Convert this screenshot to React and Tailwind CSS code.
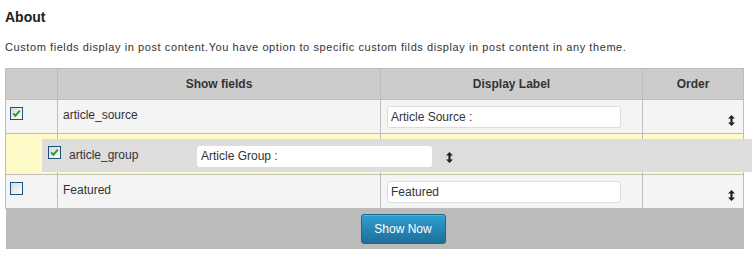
import React from "react";

function Check({ checked }) {
  return (
    <span className="relative inline-block w-[13px] h-[13px] border border-[#1c5180] bg-linear-to-br from-[#d8d8d8] to-white align-top">
      {checked && (
        <svg viewBox="0 0 11 11" className="absolute left-0 top-0 w-[11px] h-[11px]">
          <path d="M2.2 5.4 L4.4 7.8 L8.8 2.6" fill="none" stroke="#25a025" strokeWidth="2" />
        </svg>
      )}
    </span>
  );
}

function SortArrow() {
  return (
    <svg viewBox="0 0 7 11" className="inline-block w-[7px] h-[11px]">
      <path d="M3.5 0 L7 3.6 H4.6 V7.4 H7 L3.5 11 L0 7.4 H2.4 V3.6 H0 Z" fill="#222" />
    </svg>
  );
}

const rows = [
  { name: "article_source", label: "Article Source :", checked: true },
  { name: "article_group", label: "Article Group :", checked: true, dragging: true },
  { name: "Featured", label: "Featured", checked: false },
];

export default function App() {
  return (
    <div className="relative w-[752px] h-[258px] overflow-hidden bg-white text-[#333] font-['Liberation_Sans',Arial,sans-serif]">
      <div className="px-[5px]">
        <h2 className="pt-[9px] text-[14px] leading-[17px] font-bold text-[#222]">About</h2>
        <p className="mt-[15px] text-[11px] leading-[13px] tracking-[0.58px] text-[#333]">
          Custom fields display in post content.You have option to specific custom filds display in post content in any theme.
        </p>

        <div className="relative mt-[14px] w-[738px]">
          <table className="w-[738px] table-fixed border-collapse text-[12px] leading-[14px]">
            <colgroup>
              <col className="w-[52px]" />
              <col className="w-[323px]" />
              <col className="w-[262px]" />
              <col className="w-[101px]" />
            </colgroup>
            <thead>
              <tr className="bg-[#cccccc]">
                <th className="h-[31px] border border-[#bdbdbd]"></th>
                <th className="h-[31px] border border-[#bdbdbd] font-bold text-[#333]">Show fields</th>
                <th className="h-[31px] border border-[#bdbdbd] font-bold text-[#333]">Display Label</th>
                <th className="h-[31px] border border-[#bdbdbd] font-bold text-[#333]">Order</th>
              </tr>
            </thead>
            <tbody>
              {rows.map((row) =>
                row.dragging ? (
                  <tr key={row.name} className="bg-[#fffbc8]">
                    <td className="h-[41px] border border-[#bdbdbd]"></td>
                    <td className="h-[41px] border border-[#bdbdbd]"></td>
                    <td className="h-[41px] border border-[#bdbdbd]"></td>
                    <td className="h-[41px] border border-[#bdbdbd]"></td>
                  </tr>
                ) : (
                  <tr key={row.name} className="bg-[#f4f4f4]">
                    <td className="border border-[#bdbdbd] align-top pl-[4px] pt-[7px]">
                      <Check checked={row.checked} />
                    </td>
                    <td className="border border-[#bdbdbd] align-top pl-[5px] pt-[8px]">{row.name}</td>
                    <td className="border border-[#bdbdbd] align-top px-[6px] pt-[6px] pb-[5px]">
                      <div className="h-[22px] w-[234px] rounded-[3px] border border-[#dddddd] bg-white pl-[3px] leading-[20px] text-[12px] text-[#333]">
                        {row.label}
                      </div>
                    </td>
                    <td className="border border-[#bdbdbd] align-top pr-[8px] pt-[13px] text-right">
                      <SortArrow />
                    </td>
                  </tr>
                )
              )}
            </tbody>
            <tfoot>
              <tr className="bg-[#bbbbbb]">
                <td colSpan={4} className="h-[40px] pl-[355px] align-middle">
                  <button
                    type="button"
                    className="h-[30px] w-[85px] rounded-[3px] border border-[#1b6a8e] bg-linear-to-b from-[#2e9fd2] to-[#1f6f96] text-[12px] text-white shadow-[inset_0_1px_0_rgba(120,200,240,0.5)]"
                  >
                    Show Now
                  </button>
                </td>
              </tr>
            </tfoot>
          </table>

          {/* drag helper floating over the placeholder */}
          <div className="absolute left-[37px] top-[71px] flex h-[33px] w-[760px] items-start bg-[#dddddd] text-[12px] leading-[14px]">
            <div className="w-[21px] pl-[6px] pt-[7px]">
              <Check checked />
            </div>
            <div className="w-[134px] pl-[6px] pt-[9px] text-[#333]">article_group</div>
            <div className="pt-[7px]">
              <div className="h-[21px] w-[235px] rounded-[3px] bg-white pl-[4px] leading-[21px] text-[#333]">
                Article Group :
              </div>
            </div>
            <div className="pl-[14px] pt-[11px]">
              <SortArrow />
            </div>
          </div>
        </div>
      </div>
    </div>
  );
}
